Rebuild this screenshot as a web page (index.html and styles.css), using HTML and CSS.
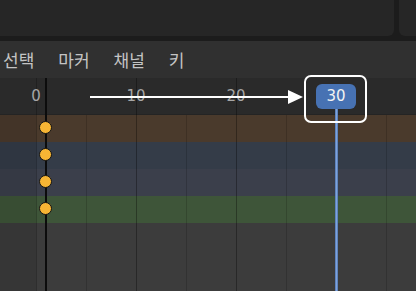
FILE: index.html
```html
<!DOCTYPE html>
<html lang="ko">
<head>
<meta charset="utf-8">
<link rel="stylesheet" href="styles.css">
</head>
<body>
<div class="app">
  <div class="topbar">
    <div class="panel panel-main"></div>
    <div class="panel panel-side"></div>
  </div>
  <div class="menubar">
    <span class="menu-item">선택</span>
    <span class="menu-item">마커</span>
    <span class="menu-item">채널</span>
    <span class="menu-item">키</span>
  </div>
  <div class="timeline">
    <div class="ruler"></div>
    <div class="rows">
      <div class="row row-summary"></div>
      <div class="row row-object"></div>
      <div class="row row-action"></div>
      <div class="row row-group"></div>
    </div>
    <div class="fill"></div>

    <div class="pre-range"></div>
    <div class="grid minor" style="left:86px"></div>
    <div class="grid major" style="left:136px"></div>
    <div class="grid minor" style="left:186px"></div>
    <div class="grid major" style="left:236px"></div>
    <div class="grid minor" style="left:286px"></div>
    <div class="grid minor" style="left:386px"></div>
    <div class="grid start" style="left:36px"></div>
    <div class="frame-line" style="left:45px"></div>

    <span class="label" style="left:36px">0</span>
    <span class="label" style="left:136px">10</span>
    <span class="label" style="left:236px">20</span>

    <div class="key" style="top:50px"></div>
    <div class="key" style="top:77px"></div>
    <div class="key" style="top:104px"></div>
    <div class="key" style="top:131px"></div>

    <div class="playhead-line"></div>
    <div class="playhead">30</div>

    <div class="arrow">
      <div class="arrow-shaft"></div>
      <div class="arrow-head"></div>
    </div>
    <div class="highlight"></div>
  </div>
</div>
</body>
</html>
```
FILE: styles.css
```css
html, body {
  margin: 0;
  padding: 0;
  background: #1c1c1c;
  overflow: hidden;
}
.app {
  width: 416px;
  height: 291px;
  display: flex;
  flex-direction: column;
  overflow: hidden;
}
.topbar {
  height: 36px;
  flex: none;
  display: flex;
  gap: 5px;
  background: #1c1c1c;
  margin-bottom: 5px;
}
.panel {
  background: #262626;
}
.panel-main {
  width: 394px;
  border-radius: 0 0 6px 0;
}
.panel-side {
  flex: 1;
  border-radius: 0 0 0 6px;
}
.menubar {
  height: 37px;
  flex: none;
  background: #303030;
  display: flex;
  align-items: center;
  gap: 24px;
  padding-left: 3px;
  font-family: "Noto Sans CJK KR", "Noto Sans", sans-serif;
  font-size: 17px;
  color: #c4c4c4;
}
.menu-item {
  line-height: 20px;
}
.timeline {
  position: relative;
  flex: 1;
  display: flex;
  flex-direction: column;
  background: #3c3c3c;
}
.ruler {
  height: 36px;
  flex: none;
  background: #2a2a2a;
  border-bottom: 1px solid #242424;
}
.rows {
  display: flex;
  flex-direction: column;
}
.row {
  height: 27px;
}
.row-summary { background: #4a3a2c; }
.row-object { background: #343c48; }
.row-action { background: #3b3f4b; }
.row-group { background: #3e5539; }
.fill {
  flex: 1;
  background: #3c3c3c;
}
.pre-range {
  position: absolute;
  left: 0;
  top: 37px;
  bottom: 0;
  width: 36px;
  background: rgba(0, 0, 0, 0.09);
}
.grid {
  position: absolute;
  top: 37px;
  bottom: 0;
  width: 1px;
}
.grid.minor { background: rgba(0, 0, 0, 0.16); }
.grid.major { background: rgba(0, 0, 0, 0.32); top: 0; }
.grid.start { background: rgba(0, 0, 0, 0.22); top: 0; }
.frame-line {
  position: absolute;
  top: 0;
  bottom: 0;
  width: 2px;
  background: #0c0c0c;
}
.label {
  position: absolute;
  top: 8px;
  transform: translateX(-50%);
  font-family: "DejaVu Sans", sans-serif;
  font-size: 15px;
  line-height: 20px;
  color: #a6a6a6;
}
.key {
  position: absolute;
  left: 39px;
  width: 11px;
  height: 11px;
  margin-top: -7px;
  border-radius: 50%;
  background: #f7b534;
  border: 1.5px solid #141414;
}
.playhead-line {
  position: absolute;
  left: 335px;
  top: 30px;
  bottom: 0;
  width: 3px;
  background: linear-gradient(90deg, #4e73ab, #7ea3dd, #4e73ab);
}
.playhead {
  position: absolute;
  left: 316px;
  top: 6px;
  width: 40px;
  height: 25px;
  border-radius: 6px;
  background: #4772b3;
  color: #f2f2f2;
  font-family: "DejaVu Sans", sans-serif;
  font-size: 15px;
  line-height: 25px;
  text-align: center;
}
.arrow {
  position: absolute;
  left: 90px;
  top: 12px;
  display: flex;
  align-items: center;
}
.arrow-shaft {
  width: 198px;
  height: 2px;
  background: #ffffff;
}
.arrow-head {
  width: 0;
  height: 0;
  border-top: 7px solid transparent;
  border-bottom: 7px solid transparent;
  border-left: 15px solid #ffffff;
}
.highlight {
  position: absolute;
  left: 304px;
  top: -3px;
  width: 59px;
  height: 44px;
  border: 2px solid #ffffff;
  border-radius: 7px;
}
```
